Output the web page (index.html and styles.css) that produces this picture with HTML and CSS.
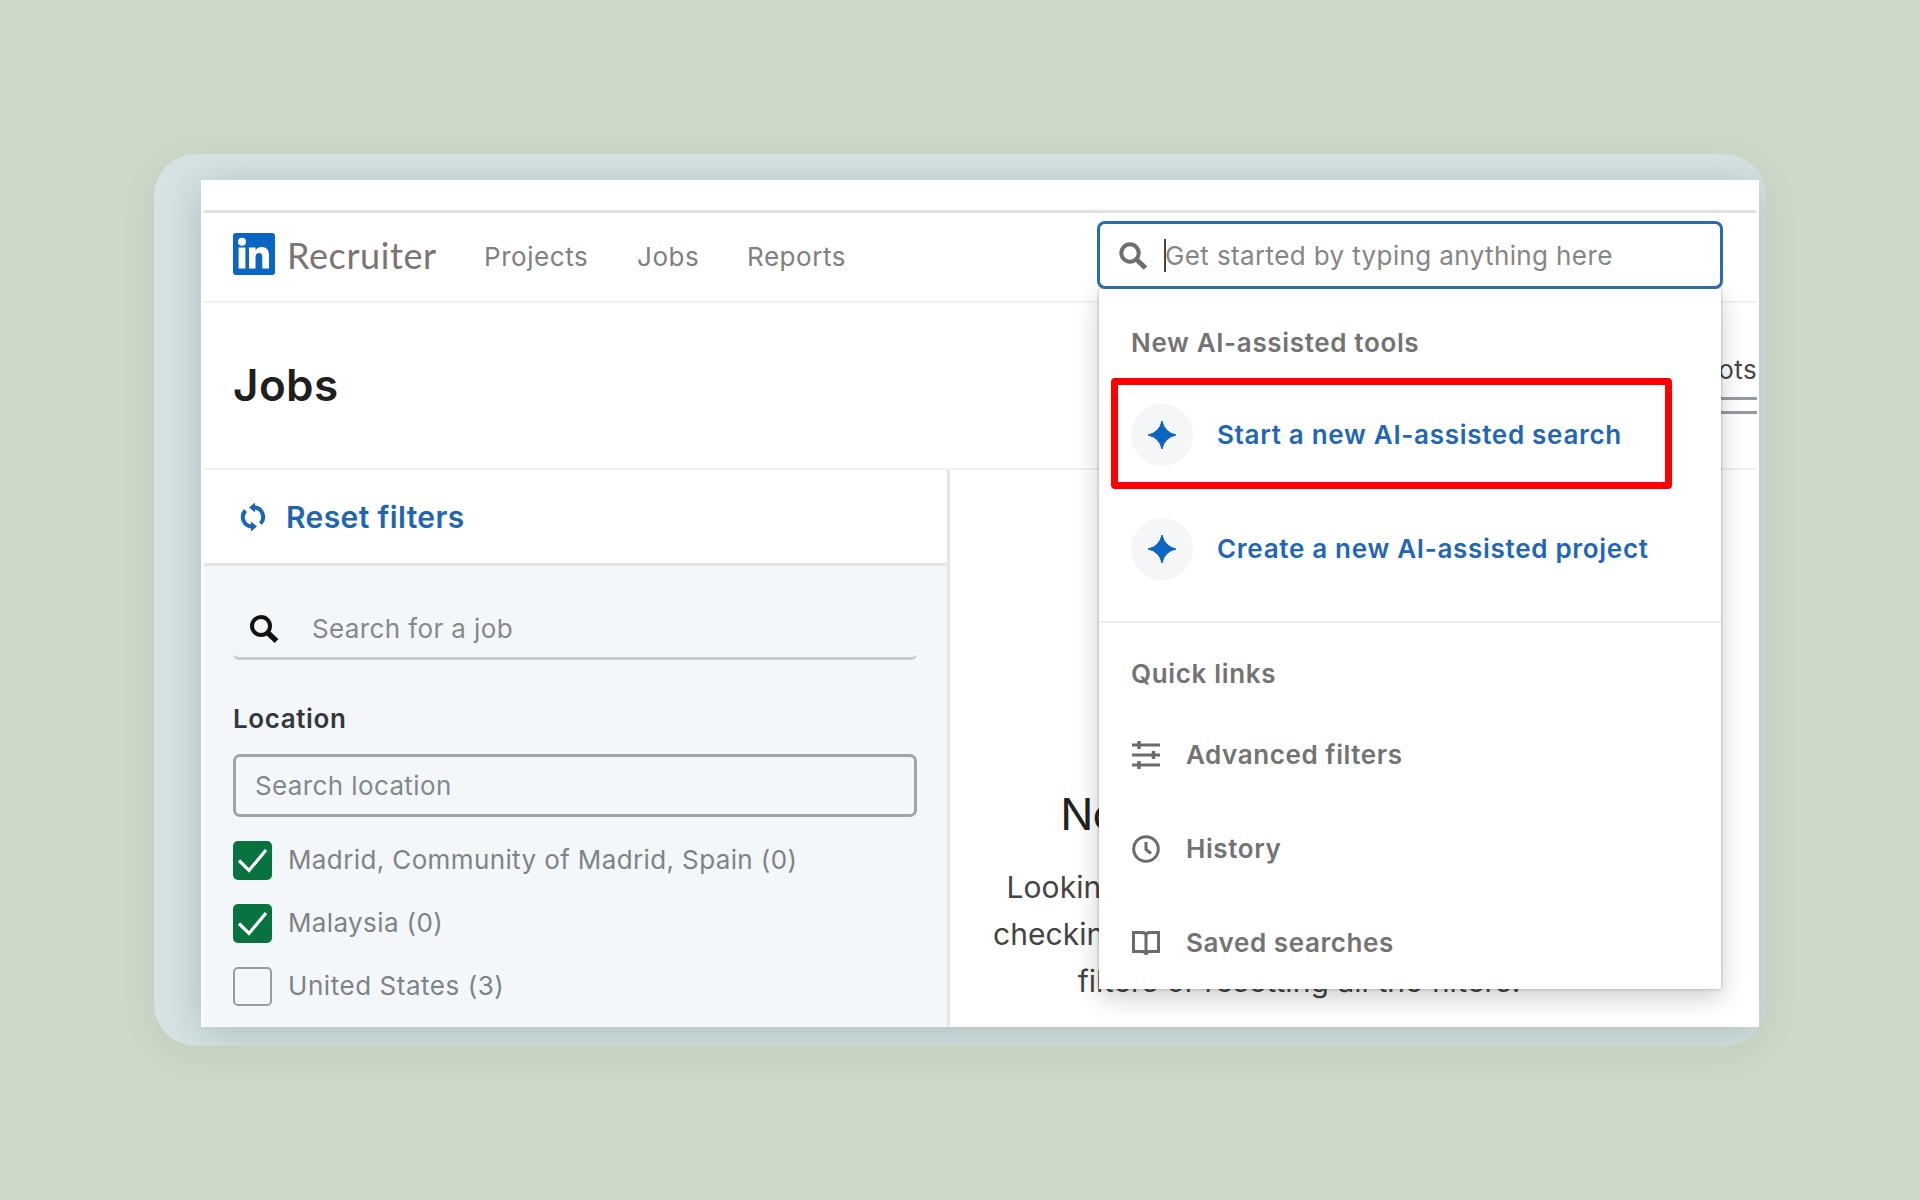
FILE: index.html
```html
<!DOCTYPE html>
<html lang="en">
<head>
    <meta charset="UTF-8">
    <meta name="viewport" content="width=device-width, initial-scale=1.0">
    <title>Recruiter - Jobs</title>
    <link rel="stylesheet" href="styles.css">
</head>
<body>
    <div class="frame">
        <div class="screen">
            <div class="strip"></div>

            <header class="nav">
                <svg class="logo" viewBox="0 0 42 42">
                    <rect width="42" height="42" rx="3" fill="#0a66c2"/>
                    <circle cx="9" cy="8.8" r="4" fill="#fff"/>
                    <rect x="5.6" y="14.500" width="6.800" height="21" fill="#fff"/>
                    <path d="M16 14.500h6.500v2.800c1-1.900 3.200-3.300 6.200-3.300 5.800 0 7.300 3.800 7.300 9v12.500h-6.700V25c0-2.700-.4-5-3.200-5s-3.600 2.200-3.600 5v10.500H16z" fill="#fff"/>
                </svg>
                <span class="brand">Recruiter</span>
                <a class="nav-link projects">Projects</a>
                <a class="nav-link jobs">Jobs</a>
                <a class="nav-link reports">Reports</a>

                <div class="search-wrap">
                    <div class="search-box">
                        <svg class="search-icon" viewBox="0 0 28 28" fill="none" stroke="#6e6e6e">
                            <circle cx="11" cy="11" r="8.700" stroke-width="4"/>
                            <path d="M17.500 17.500L26.500 26" stroke-width="5"/>
                        </svg>
                        <span class="caret"></span>
                        <span class="search-text">Get started by typing anything here</span>
                    </div>

                    <div class="menu">
                        <div class="menu-section tools">
                            <h3 class="menu-title tools-title">New AI-assisted tools</h3>
                            <a class="tool">
                                <span class="spark"><svg viewBox="0 0 28 28"><path d="M14 0Q16.500 11.500 28 14Q16.500 16.500 14 28Q11.500 16.500 0 14Q11.500 11.500 14 0z" fill="#0a66c2" stroke="#0a66c2" stroke-width="1"/></svg></span>
                                <span>Start a new AI-assisted search</span>
                            </a>
                            <a class="tool">
                                <span class="spark"><svg viewBox="0 0 28 28"><path d="M14 0Q16.500 11.500 28 14Q16.500 16.500 14 28Q11.500 16.500 0 14Q11.500 11.500 14 0z" fill="#0a66c2" stroke="#0a66c2" stroke-width="1"/></svg></span>
                                <span>Create a new AI-assisted project</span>
                            </a>
                            <div class="highlight"></div>
                        </div>
                        <div class="menu-section quick">
                            <h3 class="menu-title quick-title">Quick links</h3>
                            <a class="quick-link">
                                <svg viewBox="0 0 28 28" fill="none" stroke="#6b6b6b" stroke-width="3">
                                    <path d="M0 4h28M0 14h28M0 24h28"/>
                                    <path d="M7 0v8M21.500 10v8M7 20v8" stroke-width="3.500"/>
                                </svg>
                                <span>Advanced filters</span>
                            </a>
                            <a class="quick-link">
                                <svg viewBox="0 0 28 28" fill="none" stroke="#6b6b6b" stroke-width="3">
                                    <circle cx="14" cy="14" r="12.300"/>
                                    <path d="M14 7v7.500l5 4"/>
                                </svg>
                                <span>History</span>
                            </a>
                            <a class="quick-link">
                                <svg viewBox="0 0 28 28" fill="none" stroke="#6b6b6b" stroke-width="3">
                                    <path d="M1.500 3.500H10q4 0 4 3q0-3 4-3h8.500v19H18q-4 0-4 3q0-3-4-3H1.500zM14 6v20"/>
                                </svg>
                                <span>Saved searches</span>
                            </a>
                        </div>
                    </div>
                </div>
            </header>

            <div class="page-head">
                <h1>Jobs</h1>
                <div class="slots">
                    <span class="slots-text">Job slots</span>
                    <div class="slots-bar"></div>
                </div>
            </div>

            <div class="content">
                <aside class="sidebar">
                    <div class="reset">
                        <svg viewBox="0 0 26 28" fill="none" stroke="#1b66b4" stroke-width="4">
                            <path d="M13 4.500h2A9.500 9.500 0 0 1 20.500 20.500"/>
                            <path d="M13 23.500h-2A9.500 9.500 0 0 1 5.500 7.500"/>
                            <path d="M15 -.5v10l-6-5zM11 18.500v10l6-5z" fill="#1b66b4" stroke="none"/>
                        </svg>
                        <span>Reset filters</span>
                    </div>
                    <div class="filters">
                        <div class="job-search">
                            <svg viewBox="0 0 28 28" fill="none" stroke="#111">
                                <circle cx="11" cy="11" r="9" stroke-width="4"/>
                                <path d="M17.500 17.500L26.500 26" stroke-width="5.500"/>
                            </svg>
                            <span>Search for a job</span>
                        </div>
                        <h2>Location</h2>
                        <div class="location-input"><span>Search location</span></div>
                        <div class="option">
                            <span class="box checked"><svg viewBox="0 0 39 39"><path d="M6 19.500l10 10L33 9" fill="none" stroke="#fff" stroke-width="3.200"/></svg></span>
                            <span>Madrid, Community of Madrid, Spain (0)</span>
                        </div>
                        <div class="option">
                            <span class="box checked"><svg viewBox="0 0 39 39"><path d="M6 19.500l10 10L33 9" fill="none" stroke="#fff" stroke-width="3.200"/></svg></span>
                            <span>Malaysia (0)</span>
                        </div>
                        <div class="option">
                            <span class="box"></span>
                            <span class="opt-us">United States (3)</span>
                        </div>
                    </div>
                </aside>
                <main class="results">
                    <h2>No matching jobs found</h2>
                    <p>Looking for something else? Try again by<br>checking for typos, removing some of your<br>filters or resetting all the filters.</p>
                </main>
            </div>
        </div>
    </div>
</body>
</html>
```
FILE: styles.css
```css
* {
    box-sizing: border-box;
}
body {
    margin: 0;
    height: 1200px;
    padding: 154px 0 0 154px;
    background-color: #cdd8c8;
    font-family: Inter, "Liberation Sans", sans-serif;
    font-size: 26px;
    line-height: 36px;
    letter-spacing: 0.38px;
    color: #737373;
    white-space: nowrap;
    overflow: hidden;
}
h1, h2, h3, p {
    margin: 0;
}
svg {
    display: block;
    flex: none;
}
.frame {
    width: 1612px;
    height: 892px;
    padding: 26px 0 0 47px;
    border-radius: 42px;
    background-color: #d5e3e5;
    box-shadow: 0 8px 40px rgba(0, 0, 0, 0.05);
    overflow: hidden;
}
.screen {
    width: 1558px;
    height: 847px;
    padding: 0 3px;
    background-color: #fff;
    box-shadow: 0 6px 40px rgba(0, 0, 0, 0.18);
}
.strip {
    height: 33px;
    border-bottom: 3px solid #e2e1e1;
}

/* top navigation */
.nav {
    display: flex;
    align-items: center;
    height: 90px;
    padding-left: 29px;
    border-bottom: 2px solid #f0f0f0;
    position: relative;
}
.logo {
    width: 42px;
    height: 42px;
    margin-top: -7px;
}
.brand {
    width: 197px;
    margin: -5px 0 0 12px;
    font-family: Lato, sans-serif;
    font-size: 36px;
    letter-spacing: 0.6px;
    color: #7b7472;
}
.nav-link {
    margin-top: -1px;
    letter-spacing: 0.55px;
    color: #808080;
}
.projects {
    width: 153px;
}
.jobs {
    width: 110px;
}

/* search with its open menu */
.search-wrap {
    position: absolute;
    left: 893px;
    top: 8px;
    width: 626px;
    z-index: 2;
}
.search-box {
    display: flex;
    align-items: center;
    height: 68px;
    padding: 1px 0 0 19px;
    border: 3px solid #2a6bb0;
    border-radius: 8px;
    background-color: #fff;
    position: relative;
    z-index: 2;
}
.search-icon {
    width: 28px;
    height: 28px;
}
.caret {
    width: 2px;
    height: 33px;
    margin-left: 17px;
    background-color: #444;
}
.search-text {
    margin-left: -1px;
    color: #858585;
}
.menu {
    width: 622px;
    height: 700px;
    margin-left: 2px;
    background-color: #fff;
    box-shadow: 0 0 3px rgba(0, 0, 0, 0.3), 0 8px 24px rgba(0, 0, 0, 0.2);
}
.menu-title {
    padding-left: 32px;
    font-size: 26px;
    font-weight: 600;
    letter-spacing: 0.65px;
}
.tools {
    height: 334px;
    padding-top: 36px;
    border-bottom: 2px solid #ededed;
    position: relative;
}
.tools-title {
    margin-bottom: 17px;
}
.tool {
    display: flex;
    align-items: center;
    height: 114px;
    padding-left: 32px;
    font-weight: 600;
    letter-spacing: 0.7px;
    color: #1f66b8;
}
.spark {
    display: flex;
    align-items: center;
    justify-content: center;
    width: 62px;
    height: 62px;
    margin-right: 24px;
    border-radius: 50%;
    background-color: #f5f6f7;
}
.spark svg {
    width: 28px;
    height: 28px;
}
.highlight {
    position: absolute;
    left: 12px;
    top: 89px;
    width: 561px;
    height: 111px;
    border: 7px solid #f00;
    border-radius: 4px;
}
.quick {
    padding-top: 33px;
}
.quick-title {
    margin-bottom: 16px;
}
.quick-link {
    display: flex;
    align-items: center;
    height: 94px;
    padding-left: 33px;
    font-weight: 600;
    letter-spacing: 0.58px;
}
.quick-link svg {
    width: 28px;
    height: 28px;
    margin-right: 26px;
}

/* page heading */
.page-head {
    display: flex;
    justify-content: space-between;
    height: 167px;
    padding-left: 29px;
    border-bottom: 2px solid #f0f0f0;
}
h1 {
    padding-top: 56px;
    font-size: 44px;
    line-height: 52px;
    font-weight: 600;
    color: #1f1f1f;
}
.slots {
    padding-top: 49px;
    margin-right: -1px;
    color: #484848;
}
.slots-bar {
    height: 17px;
    margin-top: 9px;
    border: 3px solid #969b9f;
    border-right: none;
}

/* filters */
.content {
    display: flex;
    height: 557px;
}
.sidebar {
    width: 746px;
    border-right: 3px solid #e4e5e6;
    background-color: #f3f7fa;
}
.reset {
    display: flex;
    align-items: center;
    height: 96px;
    padding-left: 36px;
    border-bottom: 3px solid #e5e6e8;
    background-color: #fff;
    font-size: 30px;
    font-weight: 600;
    color: #1f66b0;
}
.reset svg {
    width: 26px;
    height: 28px;
    margin-right: 20px;
}
.filters {
    padding: 32px 30px 0 29px;
}
.job-search {
    display: flex;
    align-items: center;
    height: 62px;
    padding: 2px 0 0 17px;
    border-bottom: 3px solid #c8cccf;
    border-radius: 6px;
    color: #85898b;
}
.job-search svg {
    width: 28px;
    height: 28px;
    margin-right: 34px;
}
.filters h2 {
    margin: 41px 0 17px;
    font-size: 26px;
    font-weight: 600;
    letter-spacing: 0.6px;
    color: #35383a;
}
.location-input {
    display: flex;
    align-items: center;
    height: 63px;
    margin-bottom: 23px;
    padding-left: 19px;
    border: 3px solid #9fa4a7;
    border-radius: 7px;
    color: #84888a;
}
.option {
    display: flex;
    align-items: center;
    height: 40px;
    margin-bottom: 23px;
    color: #7f8386;
}
.opt-us {
    letter-spacing: 0.55px;
}
.box {
    width: 39px;
    height: 39px;
    margin-right: 16px;
    border: 2px solid #989c9f;
    border-radius: 5px;
}
.box.checked {
    border: none;
    background-color: #097340;
}

/* empty state, partly under the menu */
.results {
    flex: 1;
    padding: 314px 108px 0 0;
    text-align: center;
    color: #444;
}
.results h2 {
    font-size: 44px;
    line-height: 60px;
    font-weight: 400;
    letter-spacing: -0.85px;
    color: #222;
}
.results p {
    margin-top: 20px;
    font-size: 30px;
    line-height: 47px;
    letter-spacing: 0.05px;
}
```
